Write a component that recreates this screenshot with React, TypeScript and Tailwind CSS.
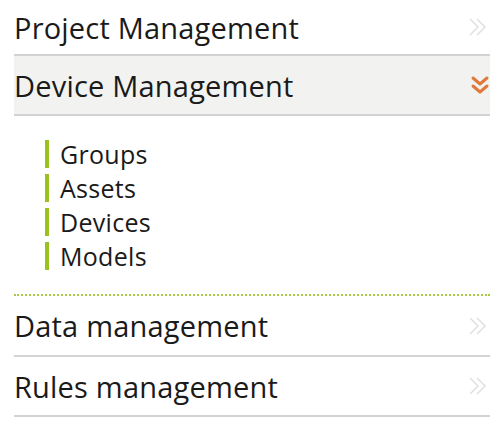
import React from 'react';

const font = { fontFamily: '"Open Sans", Lato, sans-serif' };

const ChevronsRight = () => (
  <svg width="20" height="18" viewBox="0 0 20 18" fill="none" stroke="#e0e0e0" strokeWidth="1.5">
    <path d="M2 1l8 8-8 8" />
    <path d="M9 1l8 8-8 8" />
  </svg>
);

const ChevronsDown = () => (
  <svg width="20" height="20" viewBox="0 0 20 20" fill="none" stroke="#e0783a" strokeWidth="3" strokeLinecap="round" strokeLinejoin="round">
    <path d="M3 3l7 6 7-6" />
    <path d="M3 11l7 6 7-6" />
  </svg>
);

const MenuRow = ({ label, open = false, className = '' }: { label: string; open?: boolean; className?: string }) => (
  <div
    className={`flex items-center justify-between border-b-2 border-[#d3d3d3] ${open ? 'bg-[#f2f3f1]' : ''} ${className}`}
  >
    <span className="text-[29px] text-[#1a1a1a] leading-none tracking-[0.2px]">{label}</span>
    {open ? <ChevronsDown /> : <ChevronsRight />}
  </div>
);

const subItems = ['Groups', 'Assets', 'Devices', 'Models'];

export default function App() {
  return (
    <div className="w-[504px] h-[426px] bg-white overflow-hidden" style={font}>
      <div className="mx-[14px]">
        <MenuRow label="Project Management" className="h-[56px] pr-[2px]" />
        <MenuRow label="Device Management" open className="h-[60px] pr-0" />
        <div className="pt-[24px] pl-[31px] h-[180px] border-b-2 border-dotted border-[#a9c944]">
          <div className="flex flex-col gap-[6px]">
            {subItems.map((item) => (
              <div key={item} className="flex items-center h-[28px] border-l-4 border-[#99c21c] pl-[11px]">
                <span className="text-[25px] text-[#1a1a1a] leading-none tracking-[0.3px]">{item}</span>
              </div>
            ))}
          </div>
        </div>
        <MenuRow label="Data management" className="h-[61px] pr-[2px]" />
        <MenuRow label="Rules management" className="h-[60px] pr-[2px]" />
      </div>
    </div>
  );
}
